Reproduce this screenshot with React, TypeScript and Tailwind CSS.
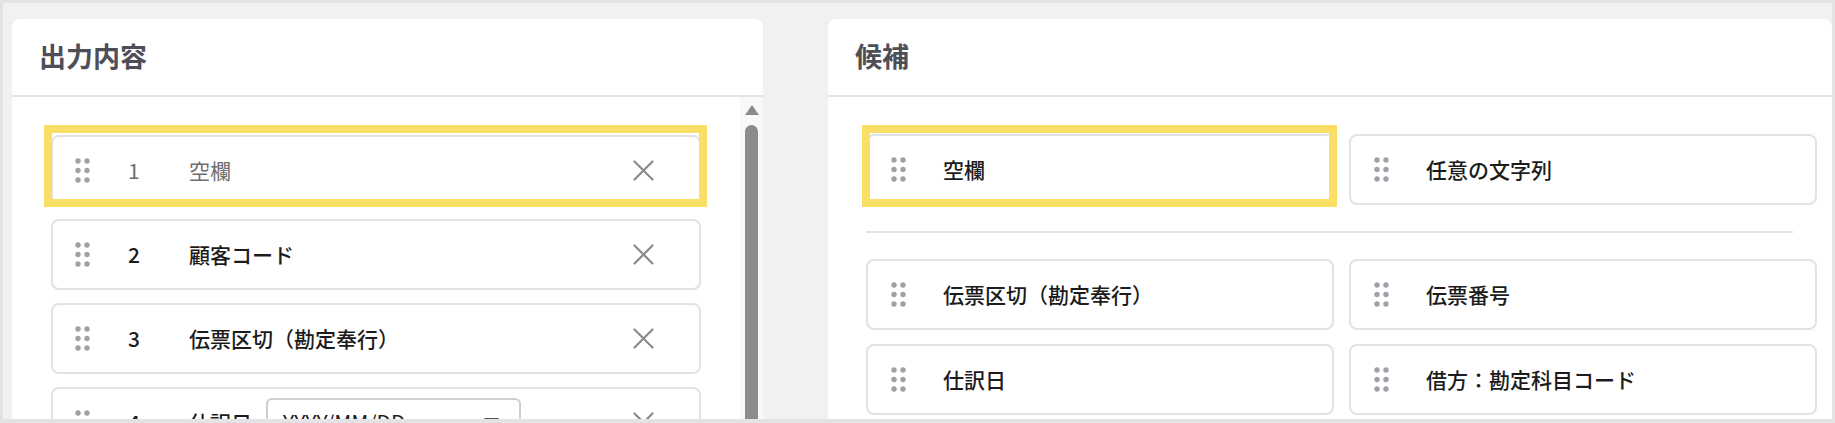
const font = { fontFamily: '"Noto Sans CJK JP", "Noto Sans", sans-serif' }

type Item = { n: number; label: string; muted?: boolean; date?: boolean }

const outputItems: Item[] = [
  { n: 1, label: "空欄", muted: true },
  { n: 2, label: "顧客コード" },
  { n: 3, label: "伝票区切（勘定奉行）" },
  { n: 4, label: "仕訳日", date: true },
]

const candidates = ["伝票区切（勘定奉行）", "伝票番号", "仕訳日", "借方：勘定科目コード"]

function Grip() {
  return (
    <svg width="15" height="25" viewBox="0 0 15 25" className="shrink-0 fill-[#a0a0a8]">
      <circle cx="3" cy="3" r="2.7" />
      <circle cx="12" cy="3" r="2.7" />
      <circle cx="3" cy="12.5" r="2.7" />
      <circle cx="12" cy="12.5" r="2.7" />
      <circle cx="3" cy="22" r="2.7" />
      <circle cx="12" cy="22" r="2.7" />
    </svg>
  )
}

function CloseIcon() {
  return (
    <svg width="21" height="21" viewBox="0 0 21 21" className="shrink-0 stroke-[#8a8a8a]" strokeWidth="2.2" strokeLinecap="round">
      <line x1="1.5" y1="1.5" x2="19.5" y2="19.5" />
      <line x1="19.5" y1="1.5" x2="1.5" y2="19.5" />
    </svg>
  )
}

function OutputCard({ item }: { item: Item }) {
  const text = item.muted ? "text-[#6e6e6e] font-normal" : "text-[#1c1c1c] font-medium"
  return (
    <div className="flex h-[71px] w-[650px] shrink-0 items-center rounded-lg border-2 border-[#e2e2e4] bg-white pl-[22px] pr-[45px]">
      <div className="w-[53px]">
        <Grip />
      </div>
      <span className={`w-[61px] text-[21px] ${text}`}>{item.n}</span>
      <span className={`text-[21px] ${text}`}>{item.label}</span>
      {item.date && (
        <div className="ml-[14px] flex h-[49px] w-[255px] items-center justify-between rounded-md border-2 border-[#cfcfd2] pl-[15px] pr-[20px]">
          <span className="text-[21px] text-[#1c1c1c]">YYYY/MM/DD</span>
          <svg width="15" height="9" viewBox="0 0 15 9" className="fill-[#555]">
            <polygon points="0,0 15,0 7.5,9" />
          </svg>
        </div>
      )}
      <div className="ml-auto">
        <CloseIcon />
      </div>
    </div>
  )
}

function CandidateCard({ label }: { label: string }) {
  return (
    <div className="flex h-[71px] items-center rounded-lg border-2 border-[#e2e2e4] bg-white pl-[23px]">
      <div className="w-[52px]">
        <Grip />
      </div>
      <span className="text-[21px] font-medium text-[#1c1c1c]">{label}</span>
    </div>
  )
}

function PanelHeader({ title }: { title: string }) {
  return (
    <div className="flex h-[78px] shrink-0 items-center border-b-2 border-[#e3e3e5] px-[27px] pb-[2px]">
      <h2 className="text-[27px] font-bold text-[#4e4e58]">{title}</h2>
    </div>
  )
}

export default function App() {
  return (
    <div
      className="flex h-[423px] w-[1835px] items-start gap-[65px] overflow-hidden border-[3px] border-b-4 border-[#e3e3e6] bg-[#f1f1f2] pl-[9px] pt-[16px]"
      style={font}
    >
      {/* 出力内容 */}
      <section className="relative flex w-[751px] shrink-0 flex-col rounded-t-lg bg-white">
        <PanelHeader title="出力内容" />
        <div className="flex">
          <div className="flex flex-1 flex-col gap-[13px] pb-[30px] pl-[39px] pt-[38px]">
            {outputItems.map((item) => (
              <OutputCard key={item.n} item={item} />
            ))}
          </div>
          <div className="flex w-[23px] flex-col items-center bg-[#f8f8f8] pt-[8px]">
            <svg width="14" height="10" viewBox="0 0 14 10" className="fill-[#8a8a8a]">
              <polygon points="7,0 14,10 0,10" />
            </svg>
            <div className="mt-[10px] w-[13px] flex-1 rounded-t-full bg-[#8c8c8c]" />
          </div>
        </div>
        <div className="absolute left-[32px] top-[106px] h-[82px] w-[663px] border-8 border-[#fadf66]" />
      </section>

      {/* 候補 */}
      <section className="relative flex min-h-[440px] flex-1 flex-col rounded-t-lg bg-white">
        <PanelHeader title="候補" />
        <div className="pl-[38px] pt-[37px]">
          <div className="grid w-[951px] grid-cols-2 gap-x-[15px]">
            <CandidateCard label="空欄" />
            <CandidateCard label="任意の文字列" />
          </div>
          <div className="my-[26px] h-[2px] w-[927px] bg-[#e3e3e5]" />
          <div className="grid w-[951px] grid-cols-2 gap-x-[15px] gap-y-[14px]">
            {candidates.map((c) => (
              <CandidateCard key={c} label={c} />
            ))}
          </div>
        </div>
        <div className="absolute left-[34px] top-[106px] h-[82px] w-[475px] border-8 border-[#fadf66]" />
      </section>
    </div>
  )
}
